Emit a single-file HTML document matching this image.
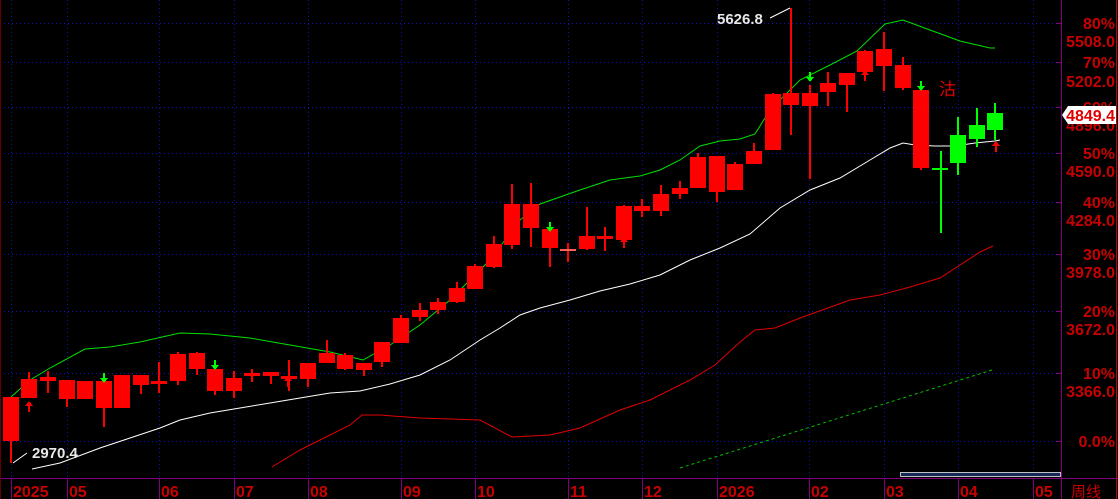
<!DOCTYPE html>
<html><head><meta charset="utf-8"><style>
html,body{margin:0;padding:0;background:#000;width:1118px;height:499px;overflow:hidden}
svg{display:block}
.ax{font-family:"Liberation Sans","Noto Sans CJK SC",sans-serif;font-weight:bold;font-size:16px;fill:#c80000}
.wt{font-family:"Liberation Sans",sans-serif;font-weight:bold;font-size:15px;fill:#e8e8e8}
</style></head><body>
<svg width="1118" height="499" viewBox="0 0 1118 499" xmlns="http://www.w3.org/2000/svg">
<rect width="1118" height="499" fill="#000"/>
<g stroke="#1010c0" stroke-width="1" stroke-dasharray="1,3" shape-rendering="crispEdges">
<line x1="0" y1="23.5" x2="1061" y2="23.5"/><line x1="0" y1="62.5" x2="1061" y2="62.5"/>
<line x1="0" y1="107.5" x2="1061" y2="107.5"/><line x1="0" y1="153.5" x2="1061" y2="153.5"/>
<line x1="0" y1="202.5" x2="1061" y2="202.5"/><line x1="0" y1="254.5" x2="1061" y2="254.5"/>
<line x1="0" y1="311.5" x2="1061" y2="311.5"/><line x1="0" y1="373.5" x2="1061" y2="373.5"/>
<line x1="0" y1="441.5" x2="1061" y2="441.5"/>
<line x1="11.5" y1="0" x2="11.5" y2="478"/><line x1="67.5" y1="0" x2="67.5" y2="478"/>
<line x1="159.5" y1="0" x2="159.5" y2="478"/><line x1="234.5" y1="0" x2="234.5" y2="478"/>
<line x1="308.5" y1="0" x2="308.5" y2="478"/><line x1="401.5" y1="0" x2="401.5" y2="478"/>
<line x1="475.5" y1="0" x2="475.5" y2="478"/><line x1="568.5" y1="0" x2="568.5" y2="478"/>
<line x1="642.5" y1="0" x2="642.5" y2="478"/><line x1="717.5" y1="0" x2="717.5" y2="478"/>
<line x1="809.5" y1="0" x2="809.5" y2="478"/><line x1="884.5" y1="0" x2="884.5" y2="478"/>
<line x1="958.5" y1="0" x2="958.5" y2="478"/><line x1="1033.5" y1="0" x2="1033.5" y2="478"/>
</g>
<polyline fill="none" stroke="#00e000" stroke-width="1" points="11,397 30,380 50,368 85,349 110,347 140,342 180,333 210,334 250,338 290,345 330,352 363,360 390,345 420,325 450,300 470,280 490,260 505,240 520,220 540,204 580,190 610,180 640,176 660,170 680,160 700,146 720,141 740,139 755,134 770,110 800,80 830,65 857,51 885,24 903,20 930,30 960,41 990,48 995,48"/>
<polyline fill="none" stroke="#fff" stroke-width="1" points="13,463 27,453"/>
<polyline fill="none" stroke="#fff" stroke-width="1" points="32,469 60,463 100,448 130,438 160,428 180,420 210,413 240,408 270,403 300,398 330,393 360,391 390,384 420,375 450,360 480,340 500,328 520,315 540,308 570,300 600,291 630,284 660,275 690,260 720,248 750,234 780,208 810,190 840,178 870,160 890,148 903,143 915,145 935,146 955,146 975,143 995,141 1000,140"/>
<polyline fill="none" stroke="#e00000" stroke-width="1" points="272,467 300,450 330,435 350,425 362,415 380,415 420,418 480,420 512,437 550,435 580,428 620,410 650,400 690,380 715,365 740,342 755,330 775,328 800,318 850,300 880,295 910,287 940,278 960,265 980,252 993,246"/>
<line x1="680" y1="468" x2="992" y2="370" stroke="#00c000" stroke-width="1" stroke-dasharray="3,3"/>
<line x1="770" y1="18" x2="790" y2="8" stroke="#fff"/>
<text class="wt" x="717" y="24">5626.8</text>
<text class="wt" x="32" y="458">2970.4</text>
<text x="939" y="95" font-family="'Noto Sans CJK SC',sans-serif" font-size="17" fill="#e00000">沽</text>
<g shape-rendering="crispEdges">
<line x1="0" y1="478.5" x2="1118" y2="478.5" stroke="#800080"/>
<line x1="1061.5" y1="0" x2="1061.5" y2="499" stroke="#800080"/>
<line x1="1116.5" y1="0" x2="1116.5" y2="499" stroke="#c00000"/>
<line x1="0.5" y1="0" x2="0.5" y2="499" stroke="#600000"/>
<g stroke="#800080">
<line x1="11.5" y1="478" x2="11.5" y2="499"/><line x1="67.5" y1="478" x2="67.5" y2="499"/>
<line x1="159.5" y1="478" x2="159.5" y2="499"/><line x1="234.5" y1="478" x2="234.5" y2="499"/>
<line x1="308.5" y1="478" x2="308.5" y2="499"/><line x1="401.5" y1="478" x2="401.5" y2="499"/>
<line x1="475.5" y1="478" x2="475.5" y2="499"/><line x1="568.5" y1="478" x2="568.5" y2="499"/>
<line x1="642.5" y1="478" x2="642.5" y2="499"/><line x1="717.5" y1="478" x2="717.5" y2="499"/>
<line x1="809.5" y1="478" x2="809.5" y2="499"/><line x1="884.5" y1="478" x2="884.5" y2="499"/>
<line x1="958.5" y1="478" x2="958.5" y2="499"/><line x1="1033.5" y1="478" x2="1033.5" y2="499"/>
<line x1="1056" y1="23.5" x2="1061" y2="23.5"/><line x1="1056" y1="62.5" x2="1061" y2="62.5"/>
<line x1="1056" y1="107.5" x2="1061" y2="107.5"/><line x1="1056" y1="153.5" x2="1061" y2="153.5"/>
<line x1="1056" y1="202.5" x2="1061" y2="202.5"/><line x1="1056" y1="254.5" x2="1061" y2="254.5"/>
<line x1="1056" y1="311.5" x2="1061" y2="311.5"/><line x1="1056" y1="373.5" x2="1061" y2="373.5"/>
<line x1="1056" y1="441.5" x2="1061" y2="441.5"/>
</g>
<rect x="900.5" y="472.5" width="160" height="4" fill="#14285a" stroke="#c0c0c0"/>
</g>
<g class="ax">
<text x="13" y="497">2025</text><text x="69" y="497">05</text><text x="161" y="497">06</text>
<text x="236" y="497">07</text><text x="310" y="497">08</text><text x="403" y="497">09</text>
<text x="477" y="497">10</text><text x="570" y="497">11</text><text x="644" y="497">12</text>
<text x="719" y="497">2026</text><text x="811" y="497">02</text><text x="886" y="497">03</text>
<text x="960" y="497">04</text><text x="1035" y="497">05</text>
<text x="1071" y="497" font-weight="normal" font-size="15">周线</text>
</g>
<g class="ax" text-anchor="end">
<text x="1115" y="29">80%</text><text x="1115" y="47">5508.0</text>
<text x="1115" y="68">70%</text><text x="1115" y="87">5202.0</text>
<text x="1115" y="113">60%</text><text x="1115" y="131">4896.0</text>
<text x="1115" y="159">50%</text><text x="1115" y="177">4590.0</text>
<text x="1115" y="208">40%</text><text x="1115" y="226">4284.0</text>
<text x="1115" y="260">30%</text><text x="1115" y="278">3978.0</text>
<text x="1115" y="317">20%</text><text x="1115" y="335">3672.0</text>
<text x="1115" y="379">10%</text><text x="1115" y="397">3366.0</text>
<text x="1115" y="447">0.0%</text>
</g>
<polygon points="1062,115 1068,106 1116,106 1116,124 1068,124" fill="#fff"/>
<text class="ax" x="1115" y="121" text-anchor="end" style="fill:#e00000">4849.4</text>
<g shape-rendering="crispEdges">
<g fill="#ff0000" stroke="none">
<rect x="10" y="397" width="2" height="66"/><rect x="3" y="397" width="16" height="44"/>
<rect x="28" y="372" width="2" height="25"/><rect x="21" y="379" width="16" height="19"/>
<rect x="47" y="371" width="2" height="22"/><rect x="40" y="377" width="16" height="4"/>
<rect x="66" y="380" width="2" height="27"/><rect x="59" y="380" width="16" height="19"/>
<rect x="84" y="381" width="2" height="18"/><rect x="77" y="381" width="16" height="18"/>
<rect x="103" y="381" width="2" height="46"/><rect x="96" y="381" width="16" height="27"/>
<rect x="121" y="375" width="2" height="33"/><rect x="114" y="375" width="16" height="33"/>
<rect x="140" y="375" width="2" height="19"/><rect x="133" y="375" width="16" height="10"/>
<rect x="158" y="362" width="2" height="31"/><rect x="151" y="381" width="16" height="3"/>
<rect x="177" y="352" width="2" height="33"/><rect x="170" y="354" width="16" height="27"/>
<rect x="196" y="352" width="2" height="23"/><rect x="189" y="353" width="16" height="16"/>
<rect x="214" y="369" width="2" height="26"/><rect x="207" y="369" width="16" height="22"/>
<rect x="233" y="371" width="2" height="27"/><rect x="226" y="378" width="16" height="13"/>
<rect x="251" y="369" width="2" height="13"/><rect x="244" y="373" width="16" height="3"/>
<rect x="270" y="372" width="2" height="12"/><rect x="263" y="372" width="16" height="4"/>
<rect x="288" y="360" width="2" height="31"/><rect x="281" y="376" width="16" height="3"/>
<rect x="307" y="363" width="2" height="24"/><rect x="300" y="363" width="16" height="16"/>
<rect x="326" y="340" width="2" height="23"/><rect x="319" y="353" width="16" height="10"/>
<rect x="344" y="353" width="2" height="17"/><rect x="337" y="355" width="16" height="14"/>
<rect x="363" y="363" width="2" height="13"/><rect x="356" y="363" width="16" height="7"/>
<rect x="381" y="342" width="2" height="25"/><rect x="374" y="342" width="16" height="20"/>
<rect x="400" y="315" width="2" height="28"/><rect x="393" y="318" width="16" height="25"/>
<rect x="419" y="303" width="2" height="18"/><rect x="412" y="310" width="16" height="7"/>
<rect x="437" y="298" width="2" height="16"/><rect x="430" y="302" width="16" height="8"/>
<rect x="456" y="282" width="2" height="21"/><rect x="449" y="288" width="16" height="14"/>
<rect x="474" y="264" width="2" height="25"/><rect x="467" y="266" width="16" height="23"/>
<rect x="493" y="236" width="2" height="32"/><rect x="486" y="244" width="16" height="23"/>
<rect x="511" y="184" width="2" height="65"/><rect x="504" y="204" width="16" height="41"/>
<rect x="530" y="183" width="2" height="64"/><rect x="523" y="204" width="16" height="24"/>
<rect x="549" y="229" width="2" height="38"/><rect x="542" y="229" width="16" height="19"/>
<rect x="567" y="243" width="2" height="19"/><rect x="560" y="249" width="16" height="2" fill="#ff6060"/>
<rect x="586" y="207" width="2" height="43"/><rect x="579" y="236" width="16" height="13"/>
<rect x="604" y="227" width="2" height="24"/><rect x="597" y="236" width="16" height="3"/>
<rect x="623" y="205" width="2" height="35"/><rect x="616" y="206" width="16" height="34"/>
<rect x="641" y="199" width="2" height="18"/><rect x="634" y="206" width="16" height="5"/>
<rect x="660" y="185" width="2" height="31"/><rect x="653" y="194" width="16" height="17"/>
<rect x="679" y="181" width="2" height="18"/><rect x="672" y="188" width="16" height="6"/>
<rect x="697" y="153" width="2" height="35"/><rect x="690" y="157" width="16" height="31"/>
<rect x="716" y="156" width="2" height="46"/><rect x="709" y="156" width="16" height="36"/>
<rect x="734" y="162" width="2" height="28"/><rect x="727" y="164" width="16" height="26"/>
<rect x="753" y="143" width="2" height="21"/><rect x="746" y="151" width="16" height="13"/>
<rect x="772" y="93" width="2" height="57"/><rect x="765" y="94" width="16" height="56"/>
<rect x="790" y="8" width="2" height="127"/><rect x="783" y="93" width="16" height="12"/>
<rect x="809" y="85" width="2" height="94"/><rect x="802" y="93" width="16" height="13"/>
<rect x="827" y="72" width="2" height="34"/><rect x="820" y="83" width="16" height="9"/>
<rect x="846" y="73" width="2" height="39"/><rect x="839" y="73" width="16" height="12"/>
<rect x="864" y="50" width="2" height="22"/><rect x="857" y="51" width="16" height="21"/>
<rect x="883" y="32" width="2" height="59"/><rect x="876" y="49" width="16" height="17"/>
<rect x="902" y="57" width="2" height="33"/><rect x="895" y="65" width="16" height="23"/>
<rect x="920" y="90" width="2" height="80"/><rect x="913" y="90" width="16" height="78"/>
<rect x="28" y="405" width="2" height="7"/><polygon points="25,406 29,401 33,406"/>
<rect x="287" y="380" width="2" height="7"/><polygon points="284,381 288,376 292,381"/>
<rect x="623" y="240" width="2" height="8"/><polygon points="620,242 624,237 628,242"/>
<rect x="864" y="74" width="2" height="7"/><polygon points="861,75 865,70 869,75"/>
<rect x="995" y="145" width="2" height="7"/><polygon points="992,146 996,141 1000,146"/>
</g>
<g fill="#00ff00">
<rect x="940" y="151" width="2" height="82"/><rect x="932" y="168" width="16" height="2"/>
<rect x="957" y="117" width="2" height="58"/><rect x="950" y="135" width="16" height="28"/>
<rect x="976" y="108" width="2" height="39"/><rect x="969" y="125" width="16" height="14"/>
<rect x="994" y="103" width="2" height="37"/><rect x="987" y="113" width="16" height="17"/>
<rect x="103" y="373" width="2" height="6"/><polygon points="100,378 104,383 108,378"/>
<rect x="214" y="360" width="2" height="6"/><polygon points="211,365 215,370 219,365"/>
<rect x="549" y="222" width="2" height="6"/><polygon points="546,227 550,232 554,227"/>
<rect x="809" y="72" width="2" height="6"/><polygon points="806,77 810,82 814,77"/>
<rect x="920" y="81" width="2" height="6"/><polygon points="917,86 921,91 925,86"/>
</g>
</g>
</svg>
</body></html>
